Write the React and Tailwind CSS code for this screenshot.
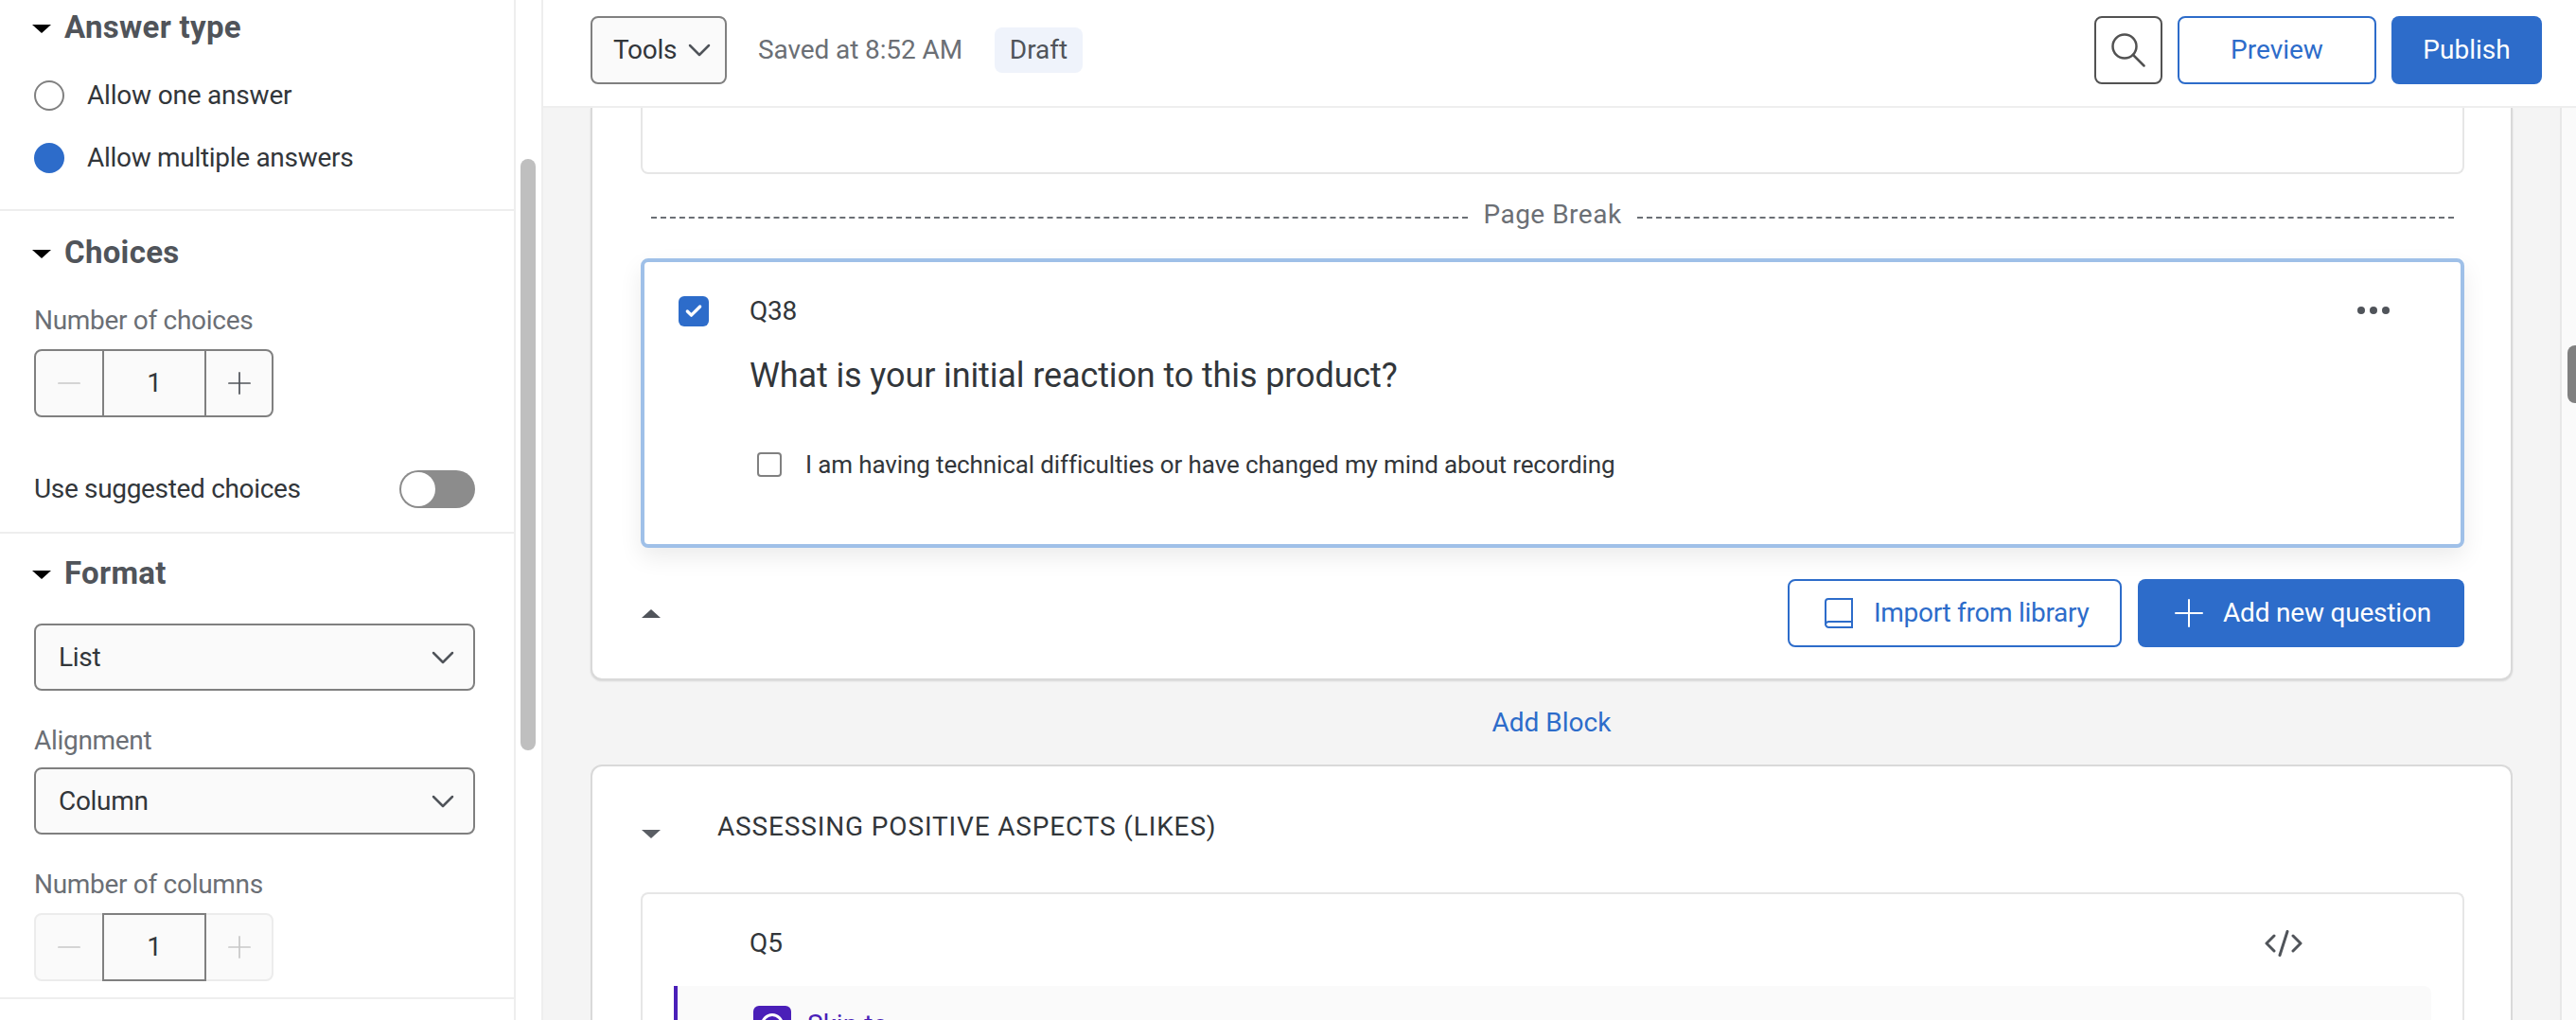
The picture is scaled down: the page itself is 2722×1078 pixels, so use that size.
import { ChevronDown, Plus, Minus, Check } from 'lucide-react';

function Caret({ className }) {
  return (
    <svg viewBox="0 0 20 9" className={className}>
      <path d="M0 0h20L10 9z" fill="currentColor" />
    </svg>
  );
}

function SectionHead({ title }) {
  return (
    <div className="flex h-10 items-center">
      <Caret className="ml-[34px] h-[9px] w-5 text-black" />
      <h3 className="ml-[14px] pb-[3px] text-[33px] font-bold tracking-[0.3px] text-[#50545a]">{title}</h3>
    </div>
  );
}

function Stepper({ plusOn }) {
  return (
    <div className={`ml-9 flex h-[72px] w-[253px] rounded-lg border-2 bg-[#fafafa] ${plusOn ? 'border-[#808080]' : 'border-[#ececec]'}`}>
      <div className="flex w-[70px] items-center justify-center">
        <Minus className="h-[38px] w-[38px] text-[#c8c8c8]" strokeWidth={1.1} />
      </div>
      <div className={`-my-[2px] flex w-[110px] items-center justify-center border-2 border-[#808080] text-[28px] text-[#32363a] ${plusOn ? 'border-y-0' : ''}`}>1</div>
      <div className="flex flex-1 items-center justify-center">
        <Plus className={`h-[38px] w-[38px] ${plusOn ? 'text-[#50545a]' : 'text-[#c8c8c8]'}`} strokeWidth={1.1} />
      </div>
    </div>
  );
}

function SelectBox({ value, className }) {
  return (
    <div className={`ml-9 mr-[41px] flex h-[71px] items-center justify-between rounded-lg border-2 border-[#808080] bg-[#fafafa] pl-[24px] pr-[12px] text-[28px] tracking-[-0.3px] text-[#32363a] ${className}`}>
      <span>{value}</span>
      <ChevronDown className="h-10 w-10 text-[#50545a]" strokeWidth={1.5} />
    </div>
  );
}

function Sidebar() {
  return (
    <aside className="flex h-full w-[574px] shrink-0">
      <div className="w-[543px] shrink-0 bg-white">
        <section className="border-b-2 border-[#eeeeee] pb-[38px] pt-[10px]">
          <SectionHead title="Answer type" />
          <div className="mt-[35px] flex h-8 items-center">
            <span className="ml-9 h-8 w-8 rounded-full border-2 border-[#808080] bg-white" />
            <span className="ml-6 text-[28px] tracking-[-0.2px] text-[#32363a]">Allow one answer</span>
          </div>
          <div className="mt-[34px] flex h-8 items-center">
            <span className="ml-9 h-8 w-8 rounded-full bg-[#2d6cca]" />
            <span className="ml-6 text-[28px] tracking-[-0.3px] text-[#32363a]">Allow multiple answers</span>
          </div>
        </section>
        <section className="border-b-2 border-[#eeeeee] pb-[25px] pt-[25px]">
          <SectionHead title="Choices" />
          <p className="ml-9 mt-[35px] h-8 text-[28px] leading-8 tracking-[-0.3px] text-[#6b6f75]">Number of choices</p>
          <div className="mt-[14px]"><Stepper plusOn /></div>
          <div className="mt-[56px] flex h-10 items-center justify-between pl-9 pr-[41px]">
            <span className="text-[28px] tracking-[-0.33px] text-[#32363a]">Use suggested choices</span>
            <span className="flex h-10 w-20 items-center rounded-full bg-[#8c8c8c] p-[2px]">
              <span className="h-9 w-9 rounded-full bg-white" />
            </span>
          </div>
        </section>
        <section className="border-b-2 border-[#eeeeee] pb-[17px] pt-[23px]">
          <SectionHead title="Format" />
          <SelectBox value="List" className="mt-8" />
          <p className="ml-9 mt-[37px] h-8 text-[28px] leading-8 tracking-[-0.3px] text-[#6b6f75]">Alignment</p>
          <SelectBox value="Column" className="mt-[12px]" />
          <p className="ml-9 mt-[37px] h-8 text-[28px] leading-8 tracking-[-0.3px] text-[#6b6f75]">Number of columns</p>
          <div className="mt-[14px]"><Stepper /></div>
        </section>
      </div>
      <div className="flex-1 border-x-2 border-[#eeeeee] bg-white px-[5px]">
        <div className="mt-[168px] h-[625px] w-4 rounded-full bg-[#bfbfbf]" />
      </div>
    </aside>
  );
}

function SearchIcon() {
  return (
    <svg viewBox="0 0 36 36" fill="none" stroke="#525252" strokeWidth="2.500" strokeLinecap="round" className="h-9 w-9">
      <circle cx="14" cy="14" r="12.500" />
      <path d="M23 23l11.500 11.500" />
    </svg>
  );
}

function TopBar() {
  return (
    <header className="flex h-[114px] shrink-0 items-center border-b-2 border-[#eeeeee] bg-white pb-[6px] pl-[50px] pr-9">
      <button className="flex h-[72px] w-[144px] items-center rounded-lg border-2 border-[#808080] bg-[#fafafa] pl-[22px] text-[28px] tracking-[-0.3px] text-[#32363a]">
        Tools
        <ChevronDown className="ml-1 h-10 w-10 text-[#50545a]" strokeWidth={1.5} />
      </button>
      <span className="ml-[33px] text-[28px] tracking-[-0.1px] text-[#6b6f75]">Saved at 8:52 AM</span>
      <span className="ml-[34px] flex h-12 w-[93px] items-center justify-center rounded-lg bg-[#eff3fb] text-[28px] text-[#50545a]">Draft</span>
      <div className="ml-auto flex items-center">
        <button className="flex h-[72px] w-[72px] items-center justify-center rounded-lg border-2 border-[#525252] bg-white">
          <SearchIcon />
        </button>
        <button className="ml-4 h-[72px] w-[210px] rounded-lg border-2 border-[#2d6cca] bg-white text-[28px] text-[#2d6cca]">Preview</button>
        <button className="ml-4 h-[72px] w-[159px] rounded-lg bg-[#2d6cca] text-[28px] text-white">Publish</button>
      </div>
    </header>
  );
}

function QuestionCard() {
  return (
    <div className="mt-[31px] rounded-lg border-4 border-[#9fc0e8] bg-white pb-[71px] pl-9 pr-[75px] pt-9 shadow-[0_10px_24px_rgba(0,0,0,0.08)]">
      <div className="flex h-8 items-center">
        <span className="flex h-8 w-8 items-center justify-center rounded-md bg-[#2d6cca]">
          <Check className="h-5 w-5 text-white" strokeWidth={4} />
        </span>
        <span className="ml-[43px] text-[28px] tracking-[-0.2px] text-[#32363a]">Q38</span>
        <span className="mb-[2px] ml-auto flex gap-[5px]">
          <i className="h-2 w-2 rounded-full bg-[#50545a]" />
          <i className="h-2 w-2 rounded-full bg-[#50545a]" />
          <i className="h-2 w-2 rounded-full bg-[#50545a]" />
        </span>
      </div>
      <p className="ml-[75px] mt-[28px] h-12 text-[36px] leading-[48px] tracking-[-0.12px] text-[#32363a]">What is your initial reaction to this product?</p>
      <div className="ml-[83px] mt-[57px] flex h-[26px] items-center">
        <span className="h-[26px] w-[26px] rounded border-2 border-[#808080] bg-white" />
        <span className="ml-[25px] text-[26px] tracking-[-0.12px] text-[#32363a]">I am having technical difficulties or have changed my mind about recording</span>
      </div>
    </div>
  );
}

function BookIcon() {
  return (
    <svg viewBox="0 0 30 32" fill="none" stroke="currentColor" strokeWidth="2" className="h-8 w-[30px]">
      <path d="M29 25H4.500A3.500 3.500 0 0 0 1 28.500V4a3 3 0 0 1 3-3h25v30H4.500A3.500 3.500 0 0 1 1 27.500" />
    </svg>
  );
}

function CodeIcon() {
  return (
    <svg viewBox="0 0 40 28" fill="none" stroke="#50545a" strokeWidth="3" strokeLinecap="round" strokeLinejoin="round" className="h-7 w-10">
      <path d="M10 6l-8 8 8 8M30 6l8 8-8 8M24 1.500l-8 25" />
    </svg>
  );
}

function Workspace() {
  return (
    <div className="flex min-h-0 flex-1 overflow-hidden">
      <div className="flex-1 bg-[#f4f4f4] px-[50px]">
        <div className="rounded-b-xl border-x-2 border-b-2 border-[#d9d9d9] bg-white pb-[33px] pl-[51px] pr-[49px] shadow-[0_1px_2px_rgba(0,0,0,0.12)]">
          <div className="h-[70px] rounded-b-lg border-x-2 border-b-2 border-[#e6e6e6]" />
          <div className="mt-[26px] flex h-8 items-center pl-[11px] pr-[11px]">
            <div className="mt-2 flex-1 border-t-2 border-dashed border-[#6b6f75]" />
            <span className="px-4 pt-px text-[28px] tracking-[0.5px] text-[#6b6f75]">Page Break</span>
            <div className="mt-2 flex-1 border-t-2 border-dashed border-[#6b6f75]" />
          </div>
          <QuestionCard />
          <div className="mt-[33px] flex h-[72px] items-center">
            <Caret className="ml-px h-[9px] w-5 rotate-180 text-[#50545a]" />
            <button className="ml-auto flex h-[72px] w-[353px] items-center rounded-lg border-2 border-[#2d6cca] bg-white pl-[37px] text-[28px] tracking-[-0.3px] text-[#2d6cca]">
              <BookIcon />
              <span className="ml-[22px]">Import from library</span>
            </button>
            <button className="ml-[17px] flex h-[72px] w-[345px] items-center rounded-lg bg-[#2d6cca] pl-[30px] text-[28px] tracking-[-0.2px] text-white">
              <Plus className="h-12 w-12" strokeWidth={1} />
              <span className="ml-3">Add new question</span>
            </button>
          </div>
        </div>
        <div className="flex h-[89px] items-center justify-center text-[28px] text-[#2d6cca]">Add Block</div>
        <div className="rounded-t-xl border-x-2 border-t-2 border-[#d9d9d9] bg-white pl-[51px] pr-[49px] pt-[43px]">
          <div className="flex h-10 items-center">
            <Caret className="ml-px mt-4 h-[9px] w-5 text-[#5a5e64]" />
            <h2 className="ml-[60px] pt-[2px] text-[28px] tracking-[0.85px] text-[#32363a]">ASSESSING POSITIVE ASPECTS (LIKES)</h2>
          </div>
          <div className="mt-[50px] rounded-t-lg border-x-2 border-t-2 border-[#e6e6e6] pt-9">
            <div className="flex h-8 items-center pl-[113px] pr-[169px]">
              <span className="text-[28px] text-[#32363a]">Q5</span>
              <span className="ml-auto"><CodeIcon /></span>
            </div>
            <div className="mx-[33px] mt-[29px] h-40 rounded-r-lg border-l-4 border-[#4a1fb8] bg-[#fafafa] pl-20 pt-5">
              <div className="flex items-center">
                <span className="flex h-10 w-10 items-center justify-center rounded-md bg-[#4a1fb8]">
                  <span className="h-6 w-6 rounded-full border-[3px] border-white" />
                </span>
                <span className="ml-[17px] text-[28px] text-[#4a1fb8]">Skip to</span>
              </div>
            </div>
          </div>
        </div>
      </div>
      <div className="w-[17px] shrink-0 border-l-2 border-[#e8e8e8] bg-[#fafafa] pl-[6px]">
        <div className="mt-[251px] h-[61px] rounded-l-lg bg-[#808080]" />
      </div>
    </div>
  );
}

export default function App() {
  return (
    <div className="flex h-[1078px] w-[2722px] overflow-hidden bg-white font-['Roboto',sans-serif]">
      <Sidebar />
      <main className="flex min-w-0 flex-1 flex-col">
        <TopBar />
        <Workspace />
      </main>
    </div>
  );
}
